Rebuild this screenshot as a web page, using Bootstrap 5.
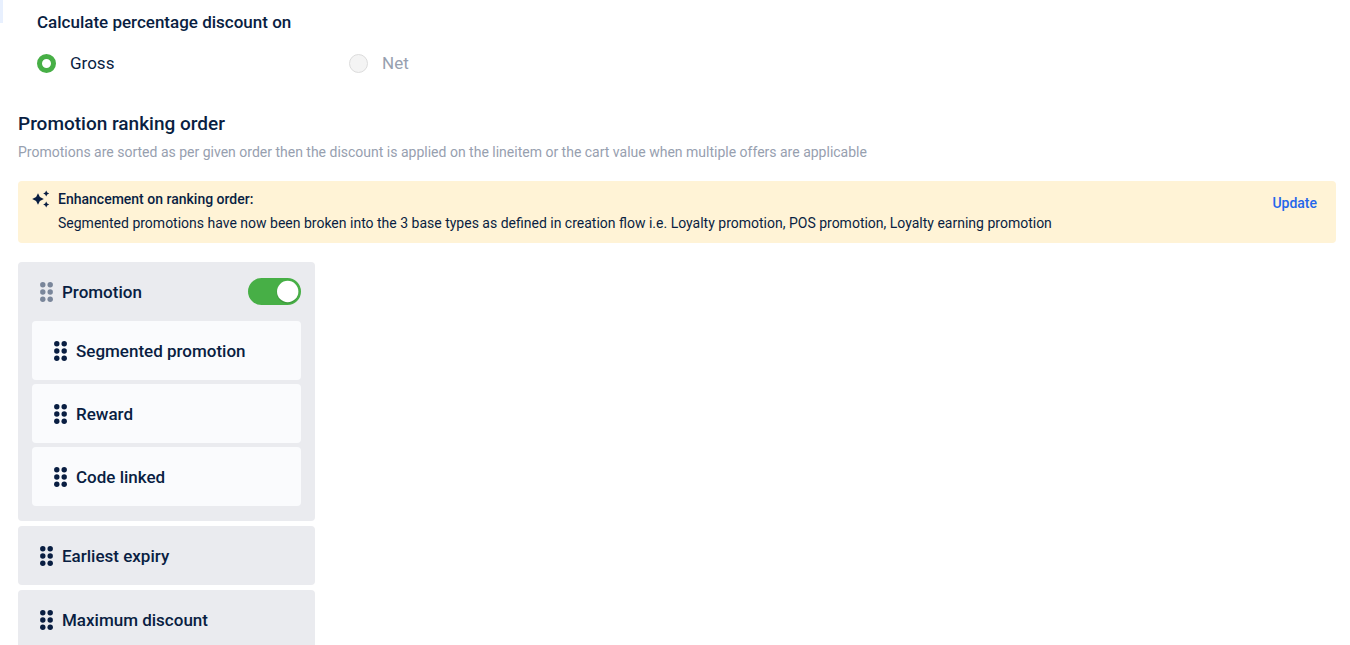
<!DOCTYPE html>
<html lang="en">
<head>
<meta charset="utf-8">
<meta name="viewport" content="width=device-width, initial-scale=1">
<title>Promotion settings</title>
<link href="https://cdn.jsdelivr.net/npm/bootstrap@5.3.0/dist/css/bootstrap.min.css" rel="stylesheet">
<style>
  :root { --ink: #091e42; --muted: #97a0af; --green: #47af46; --panel: #eaebef; }
  body { font-family: Roboto, "Liberation Sans", sans-serif; font-size: 17px; line-height: 24px; color: var(--ink); background: #fff; }
  .nav-marker { width: 3px; height: 23px; background: #e8f0fe; }
  .discount-base { padding: 10px 0 0 34px; }
  .discount-base legend { font-size: 17px; line-height: 24px; font-weight: 500; margin-bottom: 17px; }
  .choice { width: 312px; padding: 0; margin: 0; min-height: 0; gap: 14px; }
  .choice .form-check-input { float: none; margin: 0; width: 19px; height: 19px; border: 1px solid #dcdcdc; background-color: #f4f4f4; flex: none; }
  .choice .form-check-input:checked { border: 5px solid var(--green); background: #fff; }
  .choice .form-check-input:disabled, .choice .form-check-input:disabled ~ .form-check-label { opacity: 1; }
  .choice .form-check-input:disabled ~ .form-check-label { color: var(--muted); }
  .ranking { padding: 37px 14px 0 18px; }
  .ranking h2 { font-size: 19px; line-height: 24px; font-weight: 500; margin-bottom: 6px; }
  .ranking-hint { font-size: 14px; line-height: 20px; color: var(--muted); margin-bottom: 19px; }
  .notice { background: #fff3d6; border-radius: 4px; padding: 6px 19px 8px 14px; margin-bottom: 19px; font-size: 14px; line-height: 24px; }
  .notice svg { margin: 3px 8px 0 0; flex: none; }
  .notice strong { font-weight: 500; }
  .notice-action { font-size: 14px; line-height: 24px; font-weight: 500; color: #2466eb; margin-top: 4px; }
  .rank-list { max-width: 297px; gap: 5px; }
  .rank-list > li { background: var(--panel); border-radius: 4px; }
  .rank-group { padding: 0 14px 15px; }
  .rank-group > .rank-row { padding: 0 0 0 8px; }
  .rank-row { height: 59px; padding: 0 22px; font-weight: 500; gap: 9px; }
  .rank-sub { gap: 4px; }
  .rank-sub > li { background: #fafbfd; border-radius: 4px; }
  .grip { fill: var(--ink); flex: none; }
  .grip-off { fill: #7a869a; }
  .rank-switch { padding: 0; margin: 0; min-height: 0; }
  .rank-switch .form-check-input { display: block; float: none; margin: 0; width: 53px; height: 27px; border: 0; border-radius: 14px; background-size: 27px 27px; }
  .rank-switch .form-check-input:checked {
    background-color: var(--green);
    background-image: url("data:image/svg+xml,%3csvg xmlns='http://www.w3.org/2000/svg' viewBox='0 0 27 27'%3e%3ccircle cx='13.5' cy='14.5' r='11' fill='%23000' fill-opacity='.12'/%3e%3ccircle cx='13.7' cy='13.5' r='10.7' fill='%23fff'/%3e%3c/svg%3e");
  }
</style>
<script src="https://cdn.jsdelivr.net/npm/bootstrap@5.3.0/dist/js/bootstrap.bundle.min.js"></script>
</head>
<body>
<svg class="d-none">
  <symbol id="grip" viewBox="0 0 13 20">
    <circle cx="2.8" cy="2.8" r="2.7"/><circle cx="10.2" cy="2.8" r="2.7"/>
    <circle cx="2.8" cy="10" r="2.7"/><circle cx="10.2" cy="10" r="2.7"/>
    <circle cx="2.8" cy="17.2" r="2.7"/><circle cx="10.2" cy="17.2" r="2.7"/>
  </symbol>
</svg>
<main class="container-fluid p-0 overflow-hidden">
  <section class="d-flex align-items-start">
    <div class="nav-marker"></div>
    <fieldset class="discount-base flex-grow-1">
      <legend>Calculate percentage discount on</legend>
      <div class="d-flex">
        <div class="form-check choice d-flex align-items-center">
          <input class="form-check-input" type="radio" name="base" id="gross" checked>
          <label class="form-check-label" for="gross">Gross</label>
        </div>
        <div class="form-check choice d-flex align-items-center">
          <input class="form-check-input" type="radio" name="base" id="net" disabled>
          <label class="form-check-label" for="net">Net</label>
        </div>
      </div>
    </fieldset>
  </section>

  <section class="ranking">
    <h2>Promotion ranking order</h2>
    <p class="ranking-hint">Promotions are sorted as per given order then the discount is applied on the lineitem or the cart value when multiple offers are applicable</p>

    <div class="notice d-flex align-items-start">
      <svg width="18" height="18" viewBox="0 0 18 18" fill="#091e42" aria-hidden="true">
        <path d="M6 3.2 7.9 7.1 11.8 9 7.9 10.9 6 14.8 4.1 10.9.2 9 4.1 7.1Z"/>
        <path d="M14.2.5 15.2 2.5 17.2 3.5 15.2 4.5 14.2 6.5 13.2 4.5 11.2 3.5 13.2 2.5Z"/>
        <path d="M14.2 11.5 15.2 13.5 17.2 14.5 15.2 15.5 14.2 17.5 13.2 15.5 11.2 14.5 13.2 13.5Z"/>
      </svg>
      <div class="flex-grow-1">
        <strong class="d-block">Enhancement on ranking order:</strong>
        <span>Segmented promotions have now been broken into the 3 base types as defined in creation flow i.e. Loyalty promotion, POS promotion, Loyalty earning promotion</span>
      </div>
      <button type="button" class="btn btn-link notice-action p-0 border-0 text-decoration-none">Update</button>
    </div>

    <ul class="rank-list list-unstyled d-flex flex-column mb-0">
      <li class="rank-group">
        <div class="rank-row d-flex align-items-center">
          <svg class="grip grip-off" width="13" height="20" aria-hidden="true"><use href="#grip"/></svg>
          <label for="promotion-on" class="flex-grow-1">Promotion</label>
          <div class="form-check form-switch rank-switch">
            <input class="form-check-input" type="checkbox" role="switch" id="promotion-on" checked>
          </div>
        </div>
        <ul class="rank-sub list-unstyled d-flex flex-column">
          <li class="rank-row d-flex align-items-center"><svg class="grip" width="13" height="20" aria-hidden="true"><use href="#grip"/></svg>Segmented promotion</li>
          <li class="rank-row d-flex align-items-center"><svg class="grip" width="13" height="20" aria-hidden="true"><use href="#grip"/></svg>Reward</li>
          <li class="rank-row d-flex align-items-center"><svg class="grip" width="13" height="20" aria-hidden="true"><use href="#grip"/></svg>Code linked</li>
        </ul>
      </li>
      <li class="rank-row d-flex align-items-center"><svg class="grip" width="13" height="20" aria-hidden="true"><use href="#grip"/></svg>Earliest expiry</li>
      <li class="rank-row d-flex align-items-center"><svg class="grip" width="13" height="20" aria-hidden="true"><use href="#grip"/></svg>Maximum discount</li>
    </ul>
  </section>
</main>
</body>
</html>
